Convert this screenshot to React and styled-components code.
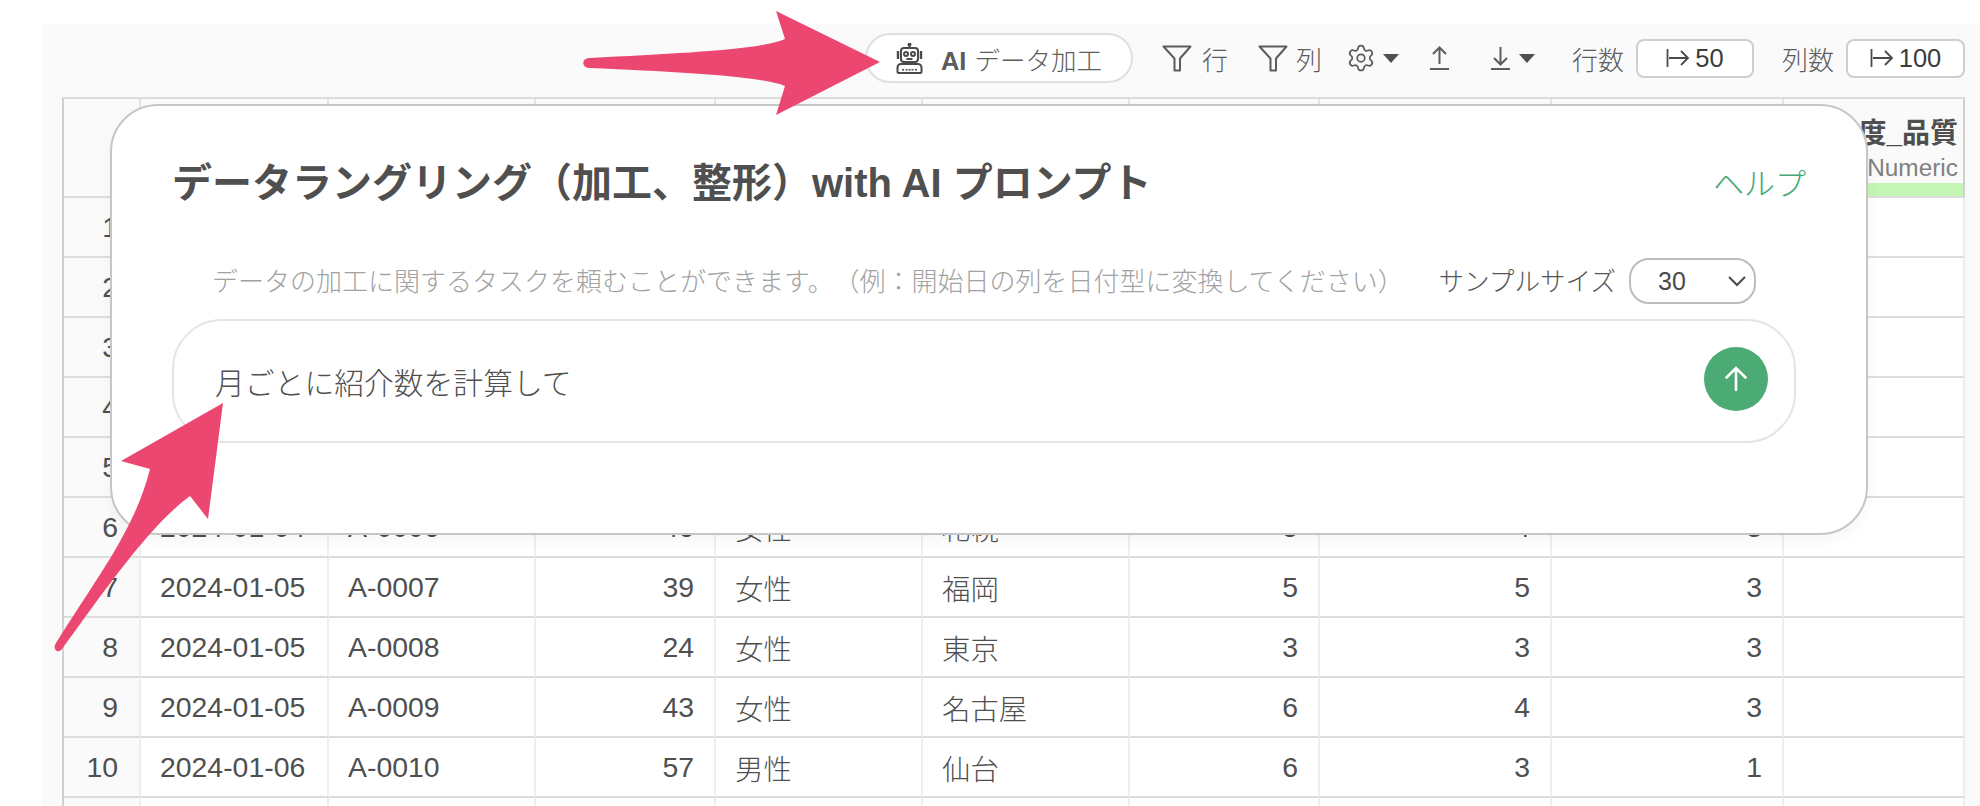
import React from "react"
import styled, { createGlobalStyle } from "styled-components"
import { Settings } from "lucide-react"

const GlobalStyle = createGlobalStyle`
  html, body {
    margin: 0;
    padding: 0;
    background: #fff;
    overflow: hidden;
  }
  * {
    box-sizing: border-box;
  }
`

const Page = styled.div`
  position: relative;
  width: 1980px;
  height: 806px;
  overflow: hidden;
  padding: 24px 0 0 42px;
  font-family: "Liberation Sans", "Noto Sans CJK JP", sans-serif;
  font-weight: 300;
  color: #4f4f4f;
`

const Panel = styled.div`
  height: 782px;
  background: #fafafa;
  padding-left: 20px;
`

const Toolbar = styled.div`
  height: 73px;
  padding: 0 15px 5px 0;
  display: flex;
  align-items: center;
  justify-content: flex-end;
  font-size: 26px;
  color: #5c5c5c;
`

const AiButton = styled.div`
  width: 268px;
  height: 50px;
  margin-right: 29px;
  border: 2px solid #dfdfdf;
  border-radius: 25px;
  background: #fff;
  display: flex;
  align-items: center;
  padding-left: 29px;
  gap: 18px;
  font-size: 25.5px;
  white-space: nowrap;
  b {
    font-weight: bold;
    margin-right: 8px;
  }
`

const ToolGroup = styled.div`
  display: flex;
  align-items: center;
  gap: ${p => p.$gap || 0}px;
  margin-right: ${p => p.$after || 0}px;
`

const Gear = styled(Settings)`
  margin: 0 -2.5px;
`

const Caret = styled.span`
  display: block;
  margin-left: 9px;
  width: 0;
  height: 0;
  border-left: 8px solid transparent;
  border-right: 8px solid transparent;
  border-top: 9px solid #505050;
`

const RangeBox = styled.div`
  width: ${p => p.$w}px;
  height: 39px;
  margin-left: 12px;
  border: 2px solid #cfcfcf;
  border-radius: 8px;
  background: #fff;
  display: flex;
  align-items: center;
  justify-content: center;
  gap: 5px;
  font-size: 25.5px;
  font-weight: 400;
  color: #3c3c3c;
`

const Table = styled.div`
  width: 1903px;
  display: grid;
  grid-template-columns: 77px 188px 207px 180px 207px 207px 190px 232px 232px 181px;
  grid-template-rows: 99px;
  grid-auto-rows: 60px;
  border-top: 2px solid #dcdcdc;
  border-left: 2px solid #d0d0d0;
  background: #fff;
`

const Cell = styled.div`
  display: flex;
  align-items: center;
  justify-content: ${p => (p.$right ? "flex-end" : "flex-start")};
  padding: 0 ${p => (p.$right ? 20 : 19)}px;
  border-right: 2px solid #eeeeee;
  border-bottom: 2px solid #dcdcdc;
  font-size: 28.4px;
  white-space: nowrap;
  overflow: hidden;
`

const NumCell = styled(Cell)`
  background: #fafafa;
  padding-right: 21px;
`

const HeadCell = styled.div`
  border-right: 2px solid #e4e4e4;
  border-bottom: 2px solid #dcdcdc;
  background: #fafafa;
  position: relative;
`

const LastHead = styled(HeadCell)`
  border-right: 2px solid #d0d0d0;
  display: flex;
  flex-direction: column;
  align-items: flex-end;
  padding: 17px 5px 0 0;
`

const HeadName = styled.div`
  font-size: 28px;
  font-weight: bold;
  line-height: 36px;
  white-space: nowrap;
`

const HeadType = styled.div`
  font-size: 24.4px;
  line-height: 30px;
  color: #808080;
  margin-top: 1px;
`

const TypeBar = styled.div`
  position: absolute;
  left: 0;
  right: 0;
  bottom: 0;
  height: 13px;
  background: #c5f5b4;
`

const Modal = styled.div`
  position: absolute;
  left: 110px;
  top: 104px;
  width: 1758px;
  height: 431px;
  z-index: 2;
  padding: 0 60px;
  background: #fff;
  border: 2px solid #c6c6c6;
  border-radius: 48px;
  box-shadow: 0 6px 14px rgba(0, 0, 0, 0.04);
`

const ModalHead = styled.div`
  display: flex;
  justify-content: space-between;
  align-items: center;
  height: 72px;
  margin-top: 38px;
`

const Title = styled.h2`
  margin: 0;
  font-size: 40px;
  font-weight: bold;
  color: #4f4f4f;
  white-space: nowrap;
`

const HelpLink = styled.span`
  font-size: 31px;
  color: #43a873;
  margin-top: 3px;
`

const HintRow = styled.div`
  display: flex;
  align-items: center;
  height: 46px;
  margin-top: 40px;
  padding-left: 40px;
  font-size: 25.6px;
  white-space: nowrap;
`

const Hint = styled.span`
  color: #a2a2a2;
  flex: 1;
  font-size: 26px;
  text-spacing-trim: space-all;
`

const SizeLabel = styled.span`
  color: #555;
`

const SizeSelect = styled.div`
  width: 127px;
  height: 46px;
  margin: 4px 50px 0 13px;
  border: 2px solid #bcbcbc;
  border-radius: 20px;
  display: flex;
  align-items: center;
  justify-content: space-between;
  padding: 0 8px 0 27px;
  font-size: 25px;
  font-weight: 400;
  color: #4a4a4a;
`

const Prompt = styled.div`
  height: 124px;
  margin-top: 17px;
  width: 1624px;
  border: 2px solid #e4e4e4;
  border-radius: 50px;
  display: flex;
  align-items: center;
  justify-content: space-between;
  padding: 0 26px 0 41px;
  font-size: 29.8px;
  color: #505050;
`

const SendButton = styled.div`
  width: 64px;
  height: 64px;
  margin-bottom: 4px;
  border-radius: 50%;
  background: #4caa75;
  display: flex;
  align-items: center;
  justify-content: center;
`

const Arrows = styled.svg`
  position: absolute;
  left: 0;
  top: 0;
  z-index: 3;
  pointer-events: none;
`

const RobotIcon = () => (
  <svg width="27" height="31" viewBox="0 0 27 31" fill="none" stroke="#4a4a4a" strokeWidth="2">
    <path d="M13.5 1v4" />
    <circle cx="13.5" cy="1.6" r="1" fill="#4a4a4a" />
    <rect x="5" y="5" width="17" height="14" rx="3" />
    <circle cx="10" cy="11" r="2" />
    <circle cx="17" cy="11" r="2" />
    <path d="M10.5 16h6" />
    <path d="M2 8v8M25 8v8" strokeWidth="2.4" />
    <path d="M8 19v2M19 19v2" />
    <path d="M5 21h17a3.5 3.5 0 0 1 3.5 3.5V29a1 1 0 0 1-1 1H2.5a1 1 0 0 1-1-1v-4.5A3.5 3.5 0 0 1 5 21z" />
    <path d="M7 26v1.5M10.5 26v1.5M13.5 26v1.5M16.5 26v1.5M20 26v1.5" />
  </svg>
)

const FilterIcon = () => (
  <svg width="30" height="27" viewBox="0 0 30 27" fill="none" stroke="#5c5c5c" strokeWidth="2" strokeLinejoin="round">
    <path d="M1.500 1.500h27L18 13.500V25.500h-5.500V13.500z" />
  </svg>
)

const UploadIcon = () => (
  <svg width="19" height="24" viewBox="0 0 19 24" fill="none" stroke="#5c5c5c" strokeWidth="2">
    <path d="M9.500 18V2M3 8l6.500-6.500L16 8M0 23h19" />
  </svg>
)

const DownloadIcon = () => (
  <svg width="19" height="24" viewBox="0 0 19 24" fill="none" stroke="#5c5c5c" strokeWidth="2">
    <path d="M9.500 1v17M3 12l6.500 6.500L16 12M0 23h19" />
  </svg>
)

const RangeIcon = () => (
  <svg width="24" height="22" viewBox="0 0 24 22" fill="none" stroke="#4a4a4a" strokeWidth="1.800">
    <path d="M1.500 2v18M3 11h19M15 4l7 7-7 7" />
  </svg>
)

const Chevron = () => (
  <svg width="18" height="11" viewBox="0 0 18 11" fill="none" stroke="#4a4a4a" strokeWidth="2">
    <path d="M1 1l8 8 8-8" />
  </svg>
)

const UpArrow = () => (
  <svg width="24" height="26" viewBox="0 0 24 26" fill="none" stroke="#fff" strokeWidth="2.600" strokeLinecap="round">
    <path d="M12 24V2M2.500 11.500L12 2l9.500 9.500" />
  </svg>
)

const filledRows = [
  ["6", "2024-01-04", "A-0006", "46", "女性", "札幌", "5", "4", "3"],
  ["7", "2024-01-05", "A-0007", "39", "女性", "福岡", "5", "5", "3"],
  ["8", "2024-01-05", "A-0008", "24", "女性", "東京", "3", "3", "3"],
  ["9", "2024-01-05", "A-0009", "43", "女性", "名古屋", "6", "4", "3"],
  ["10", "2024-01-06", "A-0010", "57", "男性", "仙台", "6", "3", "1"],
]

const DataRow = ({ row }) => (
  <>
    <NumCell $right>{row[0]}</NumCell>
    <Cell>{row[1]}</Cell>
    <Cell>{row[2]}</Cell>
    <Cell $right>{row[3]}</Cell>
    <Cell>{row[4]}</Cell>
    <Cell>{row[5]}</Cell>
    <Cell $right>{row[6]}</Cell>
    <Cell $right>{row[7]}</Cell>
    <Cell $right>{row[8]}</Cell>
    <Cell />
  </>
)

const blank = n => [String(n), "", "", "", "", "", "", "", ""]

export default function App() {
  const rows = [blank(1), blank(2), blank(3), blank(4), blank(5), ...filledRows, blank("")]
  return (
    <Page>
      <GlobalStyle />
      <Panel>
        <Toolbar>
          <AiButton>
            <RobotIcon />
            <span>
              <b>AI</b>データ加工
            </span>
          </AiButton>
          <ToolGroup $gap={10} $after={30}>
            <FilterIcon />
            <span>行</span>
          </ToolGroup>
          <ToolGroup $gap={8} $after={27}>
            <FilterIcon />
            <span>列</span>
          </ToolGroup>
          <ToolGroup $after={31}>
            <Gear size={30} strokeWidth={1.4} color="#5c5c5c" />
            <Caret />
          </ToolGroup>
          <ToolGroup $after={42}>
            <UploadIcon />
          </ToolGroup>
          <ToolGroup $after={37}>
            <DownloadIcon />
            <Caret />
          </ToolGroup>
          <ToolGroup $after={28}>
            <span>行数</span>
            <RangeBox $w={118}>
              <RangeIcon />
              50
            </RangeBox>
          </ToolGroup>
          <ToolGroup>
            <span>列数</span>
            <RangeBox $w={119}>
              <RangeIcon />
              100
            </RangeBox>
          </ToolGroup>
        </Toolbar>
        <Table>
          <HeadCell />
          <HeadCell />
          <HeadCell />
          <HeadCell />
          <HeadCell />
          <HeadCell />
          <HeadCell />
          <HeadCell />
          <HeadCell />
          <LastHead>
            <HeadName>満足度_品質</HeadName>
            <HeadType>Numeric</HeadType>
            <TypeBar />
          </LastHead>
          {rows.map((row, i) => (
            <DataRow key={i} row={row} />
          ))}
        </Table>
      </Panel>
      <Modal>
        <ModalHead>
          <Title>データラングリング（加工、整形）with AI プロンプト</Title>
          <HelpLink>ヘルプ</HelpLink>
        </ModalHead>
        <HintRow>
          <Hint>データの加工に関するタスクを頼むことができます。（例：開始日の列を日付型に変換してください）</Hint>
          <SizeLabel>サンプルサイズ</SizeLabel>
          <SizeSelect>
            30
            <Chevron />
          </SizeSelect>
        </HintRow>
        <Prompt>
          月ごとに紹介数を計算して
          <SendButton>
            <UpArrow />
          </SendButton>
        </Prompt>
      </Modal>
      <Arrows width="1980" height="806" viewBox="0 0 1980 806">
        <path
          fill="#ec4770"
          d="M880 62L776 11L785 39C760 50 680 53 590 58C581 58 581 68 590 68C680 72 760 76 785 86L776 115Z"
        />
        <path
          fill="#ec4770"
          d="M223 403L121 461L150 469C135 530 95 580 56 643C52 650 58 654 62 649C105 590 150 525 190 496L208 519Z"
        />
      </Arrows>
    </Page>
  )
}
